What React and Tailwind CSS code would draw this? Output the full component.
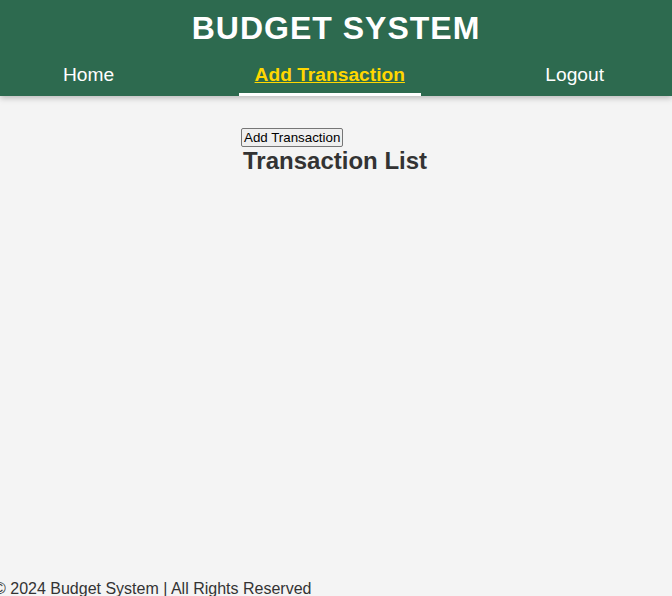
import React from 'react';

const App = () => {
  return (
    <div className="h-[596px] overflow-hidden flex flex-col bg-[#f4f4f4] text-[#333]" style={{ fontFamily: "'Liberation Sans', Arial, sans-serif" }}>
      <header className="bg-[#2d6a4f] text-white shadow-[0_2px_6px_rgba(0,0,0,0.25)] relative z-10">
        <h1 className="text-[32px] font-bold tracking-[1px] text-center leading-[37px] pt-[10px]">BUDGET SYSTEM</h1>
        <nav className="flex justify-between items-end pl-[47px] pr-[52px] mt-[17px]">
          <a className="px-[16px] pb-[7px] text-[19.2px] leading-[22px] border-b-[3px] border-transparent">Home</a>
          <a className="px-[16px] pb-[7px] text-[19.2px] leading-[22px] font-bold underline text-[#ffd700] border-b-[3px] border-white">Add Transaction</a>
          <a className="px-[16px] pb-[7px] text-[19.2px] leading-[22px] border-b-[3px] border-transparent">Logout</a>
        </nav>
      </header>

      <main className="flex-1">
        <div className="w-[190px] mx-auto mt-[29px] whitespace-nowrap">
          <button className="text-[13.33px] leading-[15px] text-black bg-[#efefef] border border-[#767676] rounded-[2px] px-[2px] py-[1px]">Add Transaction</button>
          <h2 className="text-[24px] font-bold leading-[28px] ml-[2px] mt-[-2px] text-[#333]">Transaction List</h2>
        </div>
      </main>

      <footer className="text-[16px] leading-[18px] ml-[-6px] h-[18px] mb-[-2px] whitespace-nowrap">
        © 2024 Budget System | All Rights Reserved
      </footer>
    </div>
  );
};

export default App;
